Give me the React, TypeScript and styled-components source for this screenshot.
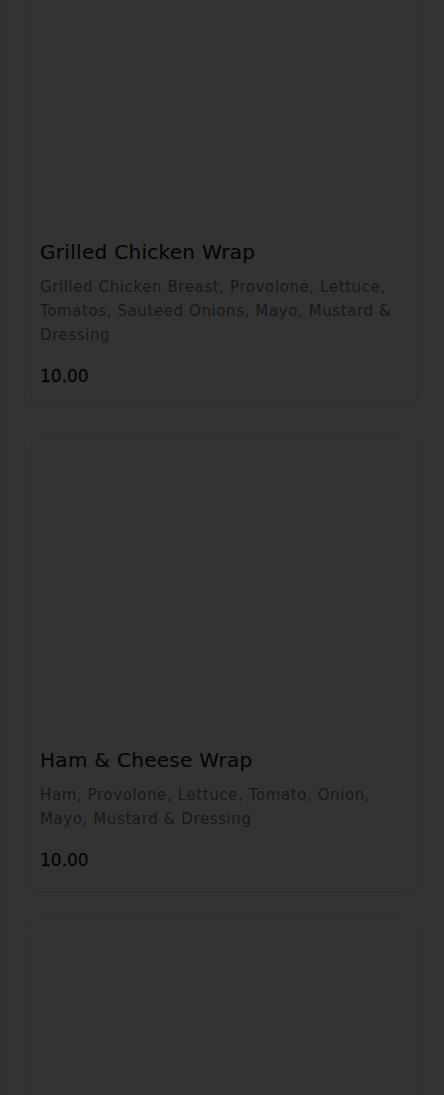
import React from "react";
import styled, { createGlobalStyle } from "styled-components";

const GlobalStyle = createGlobalStyle`
  html, body {
    margin: 0;
    padding: 0;
    background: #ffffff;
    font-family: "DejaVu Sans", "Noto Sans", sans-serif;
    overflow: hidden;
  }
`;

type Item = {
  name: string;
  description: string;
  price: string;
};

const items: Item[] = [
  {
    name: "Grilled Chicken Wrap",
    description:
      "Grilled Chicken Breast, Provolone, Lettuce, Tomatos, Sauteed Onions, Mayo, Mustard & Dressing",
    price: "10.00",
  },
  {
    name: "Ham & Cheese Wrap",
    description: "Ham, Provolone, Lettuce, Tomato, Onion, Mayo, Mustard & Dressing",
    price: "10.00",
  },
];

const App = () => {
  return (
    <>
      <GlobalStyle />
      <Page>
        <List>
          {items.map((item) => (
            <Card key={item.name}>
              <Photo />
              <Body>
                <Title>{item.name}</Title>
                <Description>{item.description}</Description>
                <Price>{item.price}</Price>
              </Body>
            </Card>
          ))}
          {/* next card, only its photo is in view */}
          <Card>
            <Photo />
          </Card>
        </List>
      </Page>
      <Overlay />
    </>
  );
};

export default App;

const Page = styled.div`
  height: 1095px;
  overflow: hidden;
  margin-left: 3px;
  border-left: 1px solid #ececec;
`;

const List = styled.div`
  display: flex;
  flex-direction: column;
  gap: 24px;
  margin-top: -76px;
  padding: 0 20px;
`;

const Card = styled.div`
  width: 396px;
  box-sizing: border-box;
  border: 1px solid #e8e8e8;
  border-radius: 16px;
  background: #ffffff;
  box-shadow: 0 1px 3px rgba(0, 0, 0, 0.06);
  overflow: hidden;
`;

const Photo = styled.div`
  height: 300px;
  background: #ffffff;
`;

const Body = styled.div`
  padding: 15px 15px 17px;
`;

const Title = styled.h3`
  margin: 0;
  font-size: 20px;
  line-height: 24px;
  font-weight: 500;
  letter-spacing: 0.3px;
  color: #1a1a1a;
  -webkit-text-stroke: 0.2px #1a1a1a;
`;

const Description = styled.p`
  margin: 11px 0 0;
  font-size: 15px;
  line-height: 24px;
  letter-spacing: 0.6px;
  color: #7a7a7a;
`;

const Price = styled.div`
  margin-top: 15px;
  font-size: 17px;
  line-height: 28px;
  font-weight: 500;
  color: #1a1a1a;
  -webkit-text-stroke: 0.3px #1a1a1a;
`;

const Overlay = styled.div`
  position: fixed;
  inset: 0;
  background: rgba(0, 0, 0, 0.8);
`;
